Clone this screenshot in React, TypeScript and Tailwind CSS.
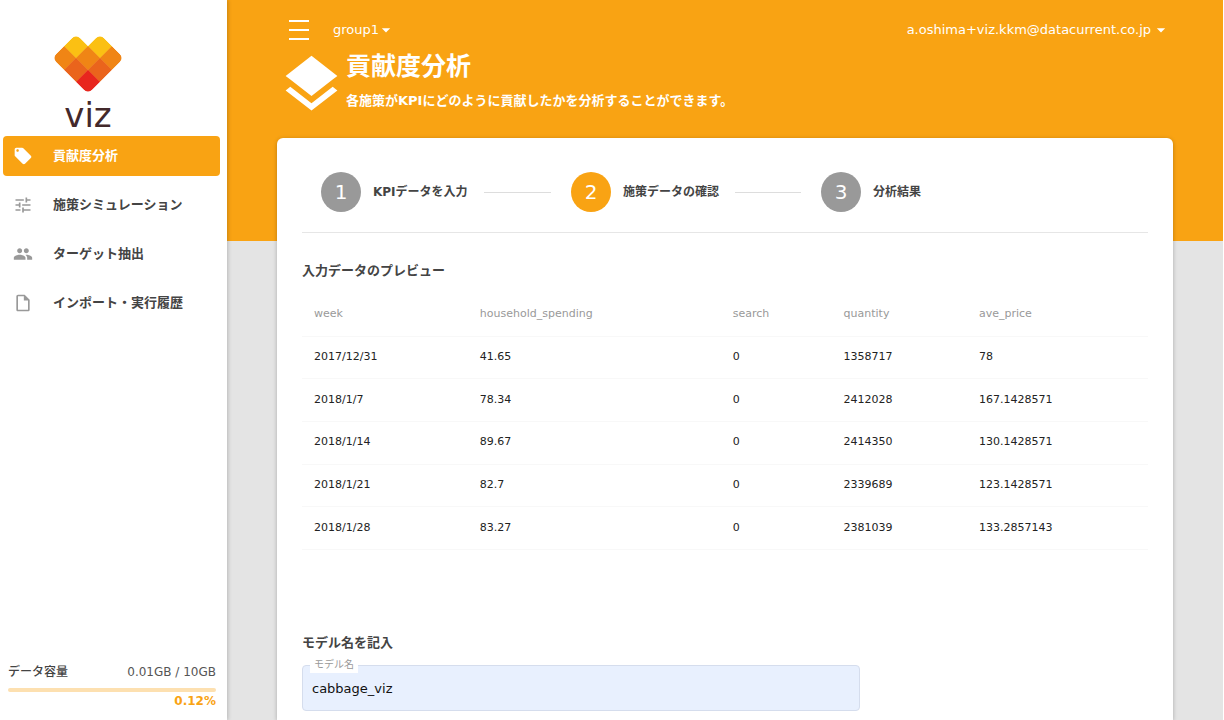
import { MdArrowDropDown, MdLayers, MdLocalOffer, MdOutlineInsertDriveFile, MdTune } from 'react-icons/md';

function PeopleIcon({ className }: { className?: string }) {
  return (
    <svg className={className} viewBox="0 0 24 24" fill="currentColor" aria-hidden="true">
      <path d="M16 11c1.66 0 2.99-1.34 2.99-3S17.66 5 16 5s-3 1.34-3 3 1.34 3 3 3zm-8 0c1.66 0 2.99-1.34 2.99-3S9.66 5 8 5 5 6.34 5 8s1.34 3 3 3zm0 2c-2.33 0-7 1.17-7 3.5V19h14v-2.5c0-2.33-4.67-3.5-7-3.5zm8 0c-.29 0-.62.02-.97.05 1.16.84 1.97 1.97 1.97 3.45V19h6v-2.5c0-2.33-4.67-3.5-7-3.5z" />
    </svg>
  );
}

const navItems = [
  { label: '貢献度分析', icon: MdLocalOffer, active: true },
  { label: '施策シミュレーション', icon: MdTune, active: false },
  { label: 'ターゲット抽出', icon: PeopleIcon, active: false },
  { label: 'インポート・実行履歴', icon: MdOutlineInsertDriveFile, active: false },
];

const steps = [
  { label: 'KPIデータを入力', active: false },
  { label: '施策データの確認', active: true },
  { label: '分析結果', active: false },
];

const columns = [
  { name: 'week', width: 'w-[19.6%]' },
  { name: 'household_spending', width: 'w-[29.9%]' },
  { name: 'search', width: 'w-[13.1%]' },
  { name: 'quantity', width: 'w-[16%]' },
  { name: 'ave_price', width: 'w-[21.4%]' },
];

const rows = [
  ['2017/12/31', '41.65', '0', '1358717', '78'],
  ['2018/1/7', '78.34', '0', '2412028', '167.1428571'],
  ['2018/1/14', '89.67', '0', '2414350', '130.1428571'],
  ['2018/1/21', '82.7', '0', '2339689', '123.1428571'],
  ['2018/1/28', '83.27', '0', '2381039', '133.2857143'],
];

function Logo() {
  // Cells of a 3x3 diamond without the top one, coloured by row
  const colors = ['', '#fbc013', '#f08515', '#ea641c', '#e8261e'];
  const cells = [0, 1, 2].flatMap((i) => [0, 1, 2].map((j) => [i, j])).filter(([i, j]) => i + j > 0);

  return (
    <div className="ml-[52px] flex w-[72px] flex-col items-center">
      <svg className="h-[60px] w-[72px]" viewBox="-36 12 72 60" aria-hidden="true">
        <defs>
          <clipPath id="heart">
            <rect x="1" y="0" width="2" height="3" rx="0.36" />
            <rect x="0" y="1" width="3" height="2" rx="0.36" />
          </clipPath>
        </defs>
        <g transform="matrix(12 12 -12 12 0 0)" clipPath="url(#heart)">
          {cells.map(([i, j]) => (
            <rect key={`${i}-${j}`} x={i} y={j} width="1.02" height="1.02" fill={colors[i + j]} />
          ))}
        </g>
      </svg>
      <span className="text-[34px] leading-[42px] text-[#43292b]">viz</span>
    </div>
  );
}

function Sidebar() {
  return (
    <aside className="relative z-10 flex w-[227px] shrink-0 flex-col bg-white pt-[34px] shadow-[1px_0_4px_rgba(0,0,0,0.2)]">
      <Logo />
      <nav className="flex flex-col gap-[9px] pr-[7px] pl-[3px]">
        {navItems.map(({ label, icon: Icon, active }) => (
          <a
            key={label}
            href="#"
            className={`flex h-10 items-center gap-5 rounded pl-[10px] text-[13px] font-bold ${
              active ? 'bg-[#f9a313] text-white' : 'text-[#444]'
            }`}
          >
            <Icon className={`size-5 ${active ? 'text-white' : 'text-[#999]'}`} />
            {label}
          </a>
        ))}
      </nav>
      <div className="mt-auto pr-[11px] pb-[10px] pl-2 text-xs text-[#555]">
        <div className="flex items-center justify-between leading-5">
          <span className="font-medium text-[#444]">データ容量</span>
          <span>0.01GB / 10GB</span>
        </div>
        <div className="mt-[6px] h-1 rounded-full bg-[#fde0b0]" />
        <p className="text-right leading-[18px] font-bold text-[#f9a313]">0.12%</p>
      </div>
    </aside>
  );
}

function Header() {
  return (
    <header className="h-[241px] shrink-0 bg-[#f9a313] px-[50px] pt-[10px] text-white">
      <div className="flex h-10 items-center pr-[2px] pl-3">
        <button type="button" aria-label="メニュー">
          <svg className="h-5 w-5" viewBox="0 0 20 20" stroke="currentColor" strokeWidth="2">
            <path d="M0 1h20M0 10h20M0 19h20" />
          </svg>
        </button>
        <button type="button" className="ml-6 flex items-center text-[13px]">
          group1
          <MdArrowDropDown className="-ml-[3px] size-5" />
        </button>
        <button type="button" className="ml-auto flex items-center text-[13px]">
          a.oshima+viz.kkm@datacurrent.co.jp
          <MdArrowDropDown className="size-5" />
        </button>
      </div>
      <div className="flex">
        <MdLayers className="size-[69px] shrink-0" />
        <div className="pt-px">
          <h1 className="text-[25px] leading-8 font-bold">貢献度分析</h1>
          <p className="mt-2 text-[13px] leading-5 font-bold">
            各施策がKPIにどのように貢献したかを分析することができます。
          </p>
        </div>
      </div>
    </header>
  );
}

function Stepper() {
  return (
    <ol className="flex border-b border-[#e6e6e6] pb-5 pl-[19px]">
      {steps.map((step, i) => (
        <li key={step.label} className="flex w-[250px] items-center">
          <span
            className={`flex size-10 shrink-0 items-center justify-center rounded-full text-xl text-white ${
              step.active ? 'bg-[#f9a313]' : 'bg-[#999]'
            }`}
          >
            {i + 1}
          </span>
          <span className="ml-3 text-xs font-bold whitespace-nowrap text-[#444]">{step.label}</span>
          {i < steps.length - 1 && <span className="mr-5 ml-4 h-px flex-1 bg-[#ddd]" />}
        </li>
      ))}
    </ol>
  );
}

function PreviewTable() {
  return (
    <table className="mt-3 h-[257px] w-full table-fixed text-left text-[11px]">
      <thead>
        <tr className="h-[43px] border-b border-[#f8f8f8] text-[#999]">
          {columns.map((col) => (
            <th key={col.name} className={`px-3 font-normal ${col.width}`}>
              {col.name}
            </th>
          ))}
        </tr>
      </thead>
      <tbody>
        {rows.map((row) => (
          <tr key={row[0]} className="border-b border-[#f8f8f8] text-[#222]">
            {row.map((value, i) => (
              <td key={columns[i].name} className="px-3">
                {value}
              </td>
            ))}
          </tr>
        ))}
      </tbody>
    </table>
  );
}

export default function App() {
  return (
    <div className="flex h-screen overflow-hidden bg-white pr-px font-['DejaVu_Sans','Noto_Sans_CJK_JP',sans-serif]">
      <Sidebar />
      <main className="flex min-w-0 flex-1 flex-col bg-[#e4e4e4]">
        <Header />
        <section className="mx-[50px] -mt-[103px] flex-1 rounded-t-md bg-white px-[25px] pt-[34px] shadow-[0_1px_4px_rgba(0,0,0,0.25)]">
          <Stepper />
          <h2 className="mt-7 text-[13px] leading-5 font-bold text-[#444]">入力データのプレビュー</h2>
          <PreviewTable />
          <h2 className="mt-[83px] text-[13px] leading-5 font-bold text-[#444]">モデル名を記入</h2>
          <div className="relative mt-3 w-[66%]">
            <label htmlFor="model" className="absolute -top-2 left-2 bg-white px-1 text-[10px] leading-4 text-[#999]">
              モデル名
            </label>
            <input
              id="model"
              type="text"
              defaultValue="cabbage_viz"
              className="block h-[46px] w-full rounded border border-[#d5dded] bg-[#e8f0fe] px-[9px] text-[13px] text-[#111] outline-none"
            />
          </div>
        </section>
      </main>
    </div>
  );
}
